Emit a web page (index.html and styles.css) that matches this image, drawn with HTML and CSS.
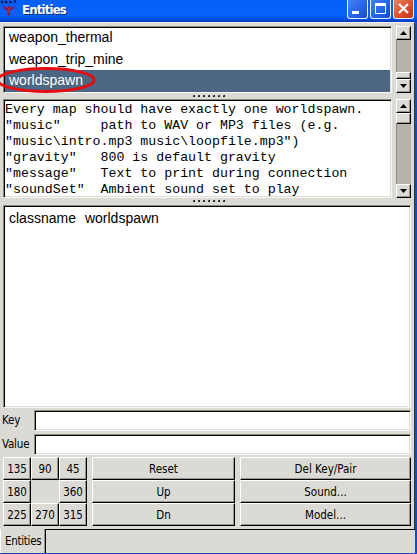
FILE: index.html
```html
<!DOCTYPE html>
<html lang="en">
<head>
<meta charset="utf-8">
<title>Entities</title>
<link rel="stylesheet" href="styles.css">
</head>
<body>
<div class="window">
  <header class="titlebar">
    <svg class="logo" width="18" height="18" viewBox="0 0 18 18"><path d="M1 1l2 2M5 1l2 2M10 3l1-2M14 2l2-1" stroke="#101040" stroke-width="2"/><path d="M2 5l5 3 2-3 2 3 5-3-4 5-2 0v5l-2 1-1-6-2 0z" fill="#851b4c"/><path d="M7 7l2 2 2-2M9 9v4" stroke="#cb2545" fill="none"/></svg>
    <h1>Entities</h1>
    <div class="controls">
      <button class="control"><svg width="20" height="19"><path d="M4 12.500h7" stroke="#fff" stroke-width="3"/></svg></button>
      <button class="control"><svg width="20" height="19"><path d="M4.500 4h10v9.500h-10z" stroke="#fff" fill="none"/><path d="M4 4.500h11" stroke="#fff" stroke-width="3"/></svg></button>
      <button class="control close"><svg width="20" height="19"><path d="M5 4l9 9M14 4l-9 9" stroke="#fff" stroke-width="2.200"/></svg></button>
    </div>
  </header>
  <main class="client">
    <section class="pane list-pane">
      <ul class="sunken list">
        <li>weapon_thermal</li>
        <li>weapon_trip_mine</li>
        <li class="selected">worldspawn</li>
      </ul>
      <div class="scrollbar">
        <div class="cap"><svg width="7" height="4"><path d="M0 4L3.500 0 7 4z"/></svg></div>
        <div class="track end"><div class="thumb small"></div></div>
        <div class="cap"><svg width="7" height="4"><path d="M0 0L3.500 4 7 0z"/></svg></div>
      </div>
      <svg class="ring" width="100" height="30"><ellipse cx="46" cy="15" rx="48" ry="11.500" fill="none" stroke="#e60d12" stroke-width="3"/></svg>
    </section>
    <div class="grip"><i></i><i></i><i></i><i></i><i></i><i></i><i></i></div>
    <section class="pane help-pane">
      <pre class="sunken help">Every map should have exactly one worldspawn.
"music"     path to WAV or MP3 files (e.g.
"music\intro.mp3 music\loopfile.mp3")
"gravity"   800 is default gravity
"message"   Text to print during connection
"soundSet"  Ambient sound set to play</pre>
      <div class="scrollbar">
        <div class="cap"><svg width="7" height="4"><path d="M0 4L3.500 0 7 4z"/></svg></div>
        <div class="track"><div class="thumb"></div></div>
        <div class="cap"><svg width="7" height="4"><path d="M0 0L3.500 4 7 0z"/></svg></div>
      </div>
    </section>
    <div class="grip second"><i></i><i></i><i></i><i></i><i></i><i></i><i></i></div>
    <section class="sunken pairs"><span class="k">classname</span><span class="v">worldspawn</span></section>
    <div class="field"><label>Key</label><div class="sunken entry"></div></div>
    <div class="field"><label>Value</label><div class="sunken entry"></div></div>
    <section class="buttons">
      <div class="angles">
        <button>135</button><button>90</button><button>45</button>
        <button>180</button><span></span><button>360</button>
        <button>225</button><button>270</button><button>315</button>
      </div>
      <div class="stack"><button>Reset</button><button>Up</button><button>Dn</button></div>
      <div class="stack"><button>Del Key/Pair</button><button>Sound...</button><button>Model...</button></div>
    </section>
  </main>
  <footer class="tabs"><div class="tab">Entities</div><div class="rest"></div></footer>
</div>
</body>
</html>
```
FILE: styles.css
```css
* { box-sizing: border-box; }
body { margin: 0; overflow: hidden; font: 11.5px "DejaVu Sans Condensed", "DejaVu Sans", sans-serif; font-stretch: condensed; color: #000; }
button { font: inherit; color: inherit; padding: 0; margin: 0; }
.window { width: 417px; height: 554px; display: flex; flex-direction: column; background: #dbdad5; border-right: 2px solid #1647d2; border-bottom: 1px solid #2647b8; }
.titlebar { height: 22px; margin-right: -2px; flex: none; display: flex; background: linear-gradient(#0560f7, #0561f8 70%, #0450df 88%, #0338b6); }
.logo { flex: none; }
h1 { margin: 0 0 0 4px; flex: 1; font: bold 13px/19px "DejaVu Sans Condensed", sans-serif; font-stretch: condensed; letter-spacing: -.8px; color: #fff; text-shadow: 1px 1px #0b2d86; }
.controls { display: flex; gap: 2px; margin-right: 3px; }
.control { width: 21px; height: 19px; border: 1px solid #e8efff; border-top: 0; border-radius: 0 0 3px 3px; background: linear-gradient(135deg, #4f7ff0, #2561e6 60%, #184bc4); overflow: hidden; }
.control svg { display: block; }
.close { background: linear-gradient(135deg, #e68562, #dc4b24 60%, #bb3712); }
.client { padding: 3px 3px 0 3px; height: 507px; flex: none; border-top: 1px solid #f2f1ed; border-right: 1px solid #333; }
.sunken { background: #fff; border: 1px solid; border-color: #8c8a83 #f8f8f5 #f8f8f5 #8c8a83; box-shadow: inset 1px 1px #000, inset -1px -1px #dddcd7; }
.pane { display: flex; gap: 4px; position: relative; }
.list-pane { height: 67px; }
.list { width: 389px; margin: 0; padding: 0 1px 1px; list-style: none; font: 14px/21px "Liberation Sans", Arial, sans-serif; overflow: hidden; }
.list li { height: 21.500px; padding-left: 4px; white-space: pre; }
.list .selected { height: 22px; background: #4b6783; color: #fff; }
.ring { position: absolute; left: -3px; top: 39px; z-index: 1; }
.scrollbar { width: 15px; display: flex; flex-direction: column; background: #b7b3aa; }
.cap, .thumb { background: #dbdad5; border: 1px solid; border-color: #fff #000 #000 #fff; box-shadow: inset -1px -1px #99968e; }
.cap { height: 14px; flex: none; display: flex; align-items: center; justify-content: center; }
.track { flex: 1; display: flex; flex-direction: column; border-left: 1px solid #8e8b83; }
.end { justify-content: flex-end; }
.thumb { height: 11px; margin-left: -1px; }
.small { height: 7px; }
.grip { height: 6px; padding-top: 2px; display: flex; gap: 3px; justify-content: center; padding-left: 3px; }
.grip i { width: 2px; height: 2px; background: linear-gradient(135deg, #fff 10%, #222 30%); }
.help-pane { height: 99px; }
.help { width: 389px; margin: 0; padding: 2px 1px 0; font: 13.280px/16px "Liberation Mono", "Courier New", monospace; overflow: hidden; }
.second { height: 7px; padding-top: 2px; }
.pairs { height: 203px; padding: 4px 5px; font: 14px/16px "Liberation Sans", Arial, sans-serif; }
.v { margin-left: 9px; }
.field { display: flex; align-items: center; height: 24px; }
.field label { width: 31px; letter-spacing: -.2px; margin-left: -1px; white-space: nowrap; }
.field .entry { flex: 1; height: 21px; margin-left: 1px; }
.buttons { display: flex; gap: 5px; margin-top: 1px; }
.angles { display: grid; grid-template-columns: repeat(3, 28px); grid-auto-rows: 23px; }
.stack { display: grid; grid-auto-rows: 23px; width: 143px; }
.stack:last-child { flex: 1; }
.buttons button { border: 1px solid; border-color: #fff #000 #000 #fff; background: #dbdad5; box-shadow: inset -1px -1px #99968e; }
.tabs { flex: 1; display: flex; }
.tab { width: 46px; padding-left: 4px; line-height: 24px; border-right: 1px solid #000; border-left: 1px solid #fff; letter-spacing: -.3px; box-shadow: inset -1px 0 #99968e; }
.rest { flex: 1; border-top: 1px solid #000; }
```
